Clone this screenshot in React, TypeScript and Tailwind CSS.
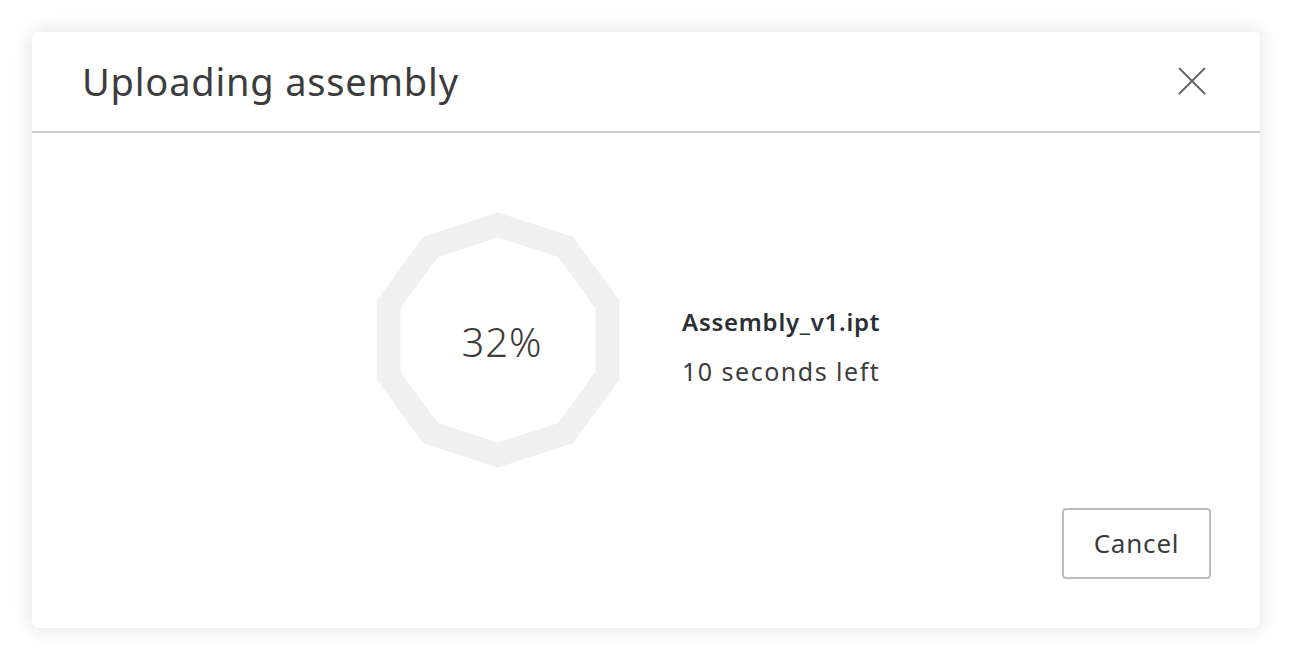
import { X } from 'lucide-react'

function ringPoints(r: number, cx: number, cy: number) {
  const pts: string[] = []
  for (let k = 0; k < 10; k++) {
    const a = ((-90 + 36 * k) * Math.PI) / 180
    pts.push(`${(cx + r * Math.cos(a)).toFixed(2)},${(cy + r * Math.sin(a)).toFixed(2)}`)
  }
  return 'M' + pts.join('L') + 'Z'
}

function ProgressRing({ value }: { value: number }) {
  return (
    <div className="relative w-[256px] h-[256px] shrink-0">
      <svg width="256" height="256" viewBox="0 0 256 256" className="absolute inset-0">
        <path
          d={ringPoints(127.5, 128, 128) + ringPoints(102.5, 128, 128)}
          fill="#f0f0f0"
          fillRule="evenodd"
        />
      </svg>
      <div className="absolute inset-0 flex items-center justify-center pt-[4px] pl-[8px] text-[40px] font-light tracking-[1px] text-[#3c3c3c]">
        {value}%
      </div>
    </div>
  )
}

export default function App() {
  return (
    <div
      className="w-[1292px] h-[660px] bg-white p-[32px]"
      style={{ fontFamily: '"Noto Sans", "Open Sans", sans-serif' }}
    >
      <div className="w-[1228px] h-[596px] flex flex-col bg-white rounded-[6px] shadow-[0_0_22px_rgba(0,0,0,0.13)]">
        {/* Header */}
        <div className="h-[101px] shrink-0 flex items-center justify-between pl-[50px] pr-[43px] border-b-2 border-[#cccccc]">
          <h1 className="text-[38px] leading-none tracking-[0.8px] text-[#3c3c3c] -mt-[2px]">Uploading assembly</h1>
          <button className="text-[#666666] -mt-[2px]">
            <X size={50} strokeWidth={0.9} />
          </button>
        </div>

        {/* Body */}
        <div className="flex-1 flex flex-col">
          <div className="flex items-center gap-[56px] pl-[338px] pt-[79px]">
            <ProgressRing value={32} />
            <div className="flex flex-col gap-[15px] leading-[34px] mt-[12px]">
              <span className="text-[24px] font-semibold tracking-[0.75px] text-[#2b2f33]">Assembly_v1.ipt</span>
              <span className="text-[25px] tracking-[1.5px] text-[#3c3c3c]">10 seconds left</span>
            </div>
          </div>
          <div className="flex-1 flex items-end justify-end pr-[49px] pb-[49px]">
            <button className="w-[149px] h-[71px] rounded-[4px] border-2 border-[#bdbdbd] text-[26px] tracking-[0.8px] text-[#3c3c3c]">
              Cancel
            </button>
          </div>
        </div>
      </div>
    </div>
  )
}
